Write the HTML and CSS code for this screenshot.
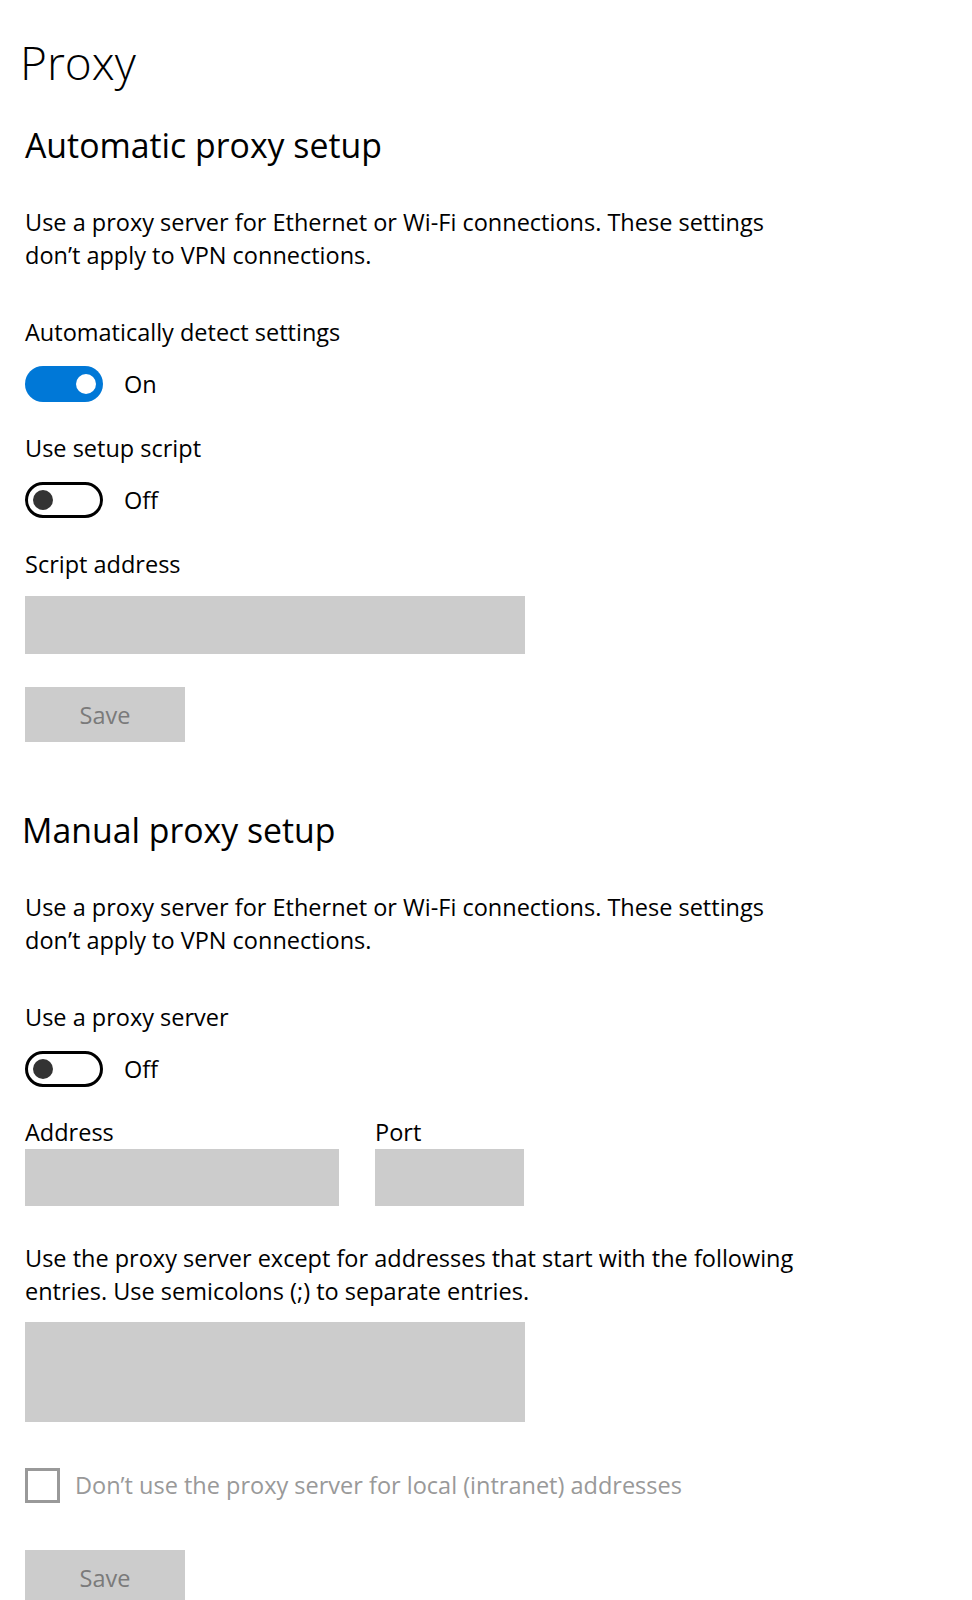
FILE: index.html
```html
<!DOCTYPE html>
<html lang="en">
<head>
    <meta charset="UTF-8">
    <meta name="viewport" content="width=device-width, initial-scale=1.0">
    <title>Proxy</title>
    <link rel="stylesheet" href="styles.css">
</head>
<body>
    <main class="page">
        <h1 class="page-title">Proxy</h1>

        <section class="group">
            <h2 class="group-title">Automatic proxy setup</h2>
            <p class="desc">Use a proxy server for Ethernet or Wi-Fi connections. These settings don’t apply to VPN connections.</p>

            <div class="field first">
                <div class="label">Automatically detect settings</div>
                <div class="toggle-row">
                    <span class="toggle on"><span class="knob"></span></span>
                    <span class="toggle-text">On</span>
                </div>
            </div>

            <div class="field">
                <div class="label">Use setup script</div>
                <div class="toggle-row">
                    <span class="toggle"><span class="knob"></span></span>
                    <span class="toggle-text">Off</span>
                </div>
            </div>

            <div class="field">
                <div class="label">Script address</div>
                <div class="input wide"></div>
            </div>

            <button class="save" disabled>Save</button>
        </section>

        <section class="group">
            <h2 class="group-title manual">Manual proxy setup</h2>
            <p class="desc">Use a proxy server for Ethernet or Wi-Fi connections. These settings don’t apply to VPN connections.</p>

            <div class="field first">
                <div class="label">Use a proxy server</div>
                <div class="toggle-row">
                    <span class="toggle"><span class="knob"></span></span>
                    <span class="toggle-text">Off</span>
                </div>
            </div>

            <div class="address-row">
                <div class="address-col">
                    <div class="label">Address</div>
                    <div class="input address"></div>
                </div>
                <div class="address-col">
                    <div class="label">Port</div>
                    <div class="input port"></div>
                </div>
            </div>

            <p class="desc exceptions">Use the proxy server except for addresses that start with the following entries. Use semicolons (;) to separate entries.</p>
            <div class="input wide area"></div>

            <label class="check-row">
                <span class="checkbox"></span>
                <span class="check-text">Don’t use the proxy server for local (intranet) addresses</span>
            </label>

            <button class="save last" disabled>Save</button>
        </section>
    </main>
</body>
</html>
```
FILE: styles.css
```css
body {
    margin: 0;
    background-color: #fff;
    color: #000;
    font-family: "Open Sans", "Noto Sans", sans-serif;
    font-size: 23.5px;
    line-height: 33px;
}

.page {
    padding: 1px 0 0 25px;
}

.page-title {
    margin: 33px 0 0 -5px;
    font-size: 46px;
    line-height: 56px;
    font-weight: 300;
}

.group-title {
    margin: 35px 0 0 0;
    font-size: 33.8px;
    line-height: 40px;
    font-weight: 400;
}

.group-title.manual {
    margin-top: 68px;
    margin-left: -3px;
}

.desc {
    margin: 41px 0 0;
    max-width: 785px;
}

.desc.exceptions {
    margin-top: 36px;
}

.field {
    margin-top: 30px;
}

.field.first {
    margin-top: 44px;
}

.toggle-row {
    display: flex;
    align-items: center;
    gap: 21px;
    margin-top: 17px;
    height: 36px;
}

.toggle {
    display: flex;
    align-items: center;
    box-sizing: border-box;
    width: 78px;
    height: 36px;
    padding: 0 5px;
    border: 3px solid #000;
    border-radius: 18px;
}

.toggle .knob {
    width: 20px;
    height: 20px;
    border-radius: 50%;
    background-color: #333;
}

.toggle.on {
    justify-content: flex-end;
    padding: 0 7px;
    border: none;
    background-color: #0078d7;
}

.toggle.on .knob {
    background-color: #fff;
}

.input {
    background-color: #ccc;
    height: 58px;
}

.input.wide {
    width: 500px;
    margin-top: 15px;
}

.input.area {
    height: 100px;
    margin-top: 14px;
}

.address-row {
    display: flex;
    gap: 36px;
    margin-top: 29px;
}

.input.address {
    width: 314px;
    height: 57px;
}

.input.port {
    width: 149px;
    height: 57px;
}

.save {
    display: block;
    width: 160px;
    height: 55px;
    margin-top: 33px;
    padding: 0;
    border: none;
    background-color: #ccc;
    color: #7a7a7a;
    font-family: inherit;
    font-size: 23.5px;
}

.save.last {
    margin-top: 47px;
}

.check-row {
    display: flex;
    align-items: center;
    gap: 15px;
    margin-top: 46px;
}

.checkbox {
    box-sizing: border-box;
    width: 35px;
    height: 35px;
    border: 3px solid #999;
}

.check-text {
    color: #999;
}
```
